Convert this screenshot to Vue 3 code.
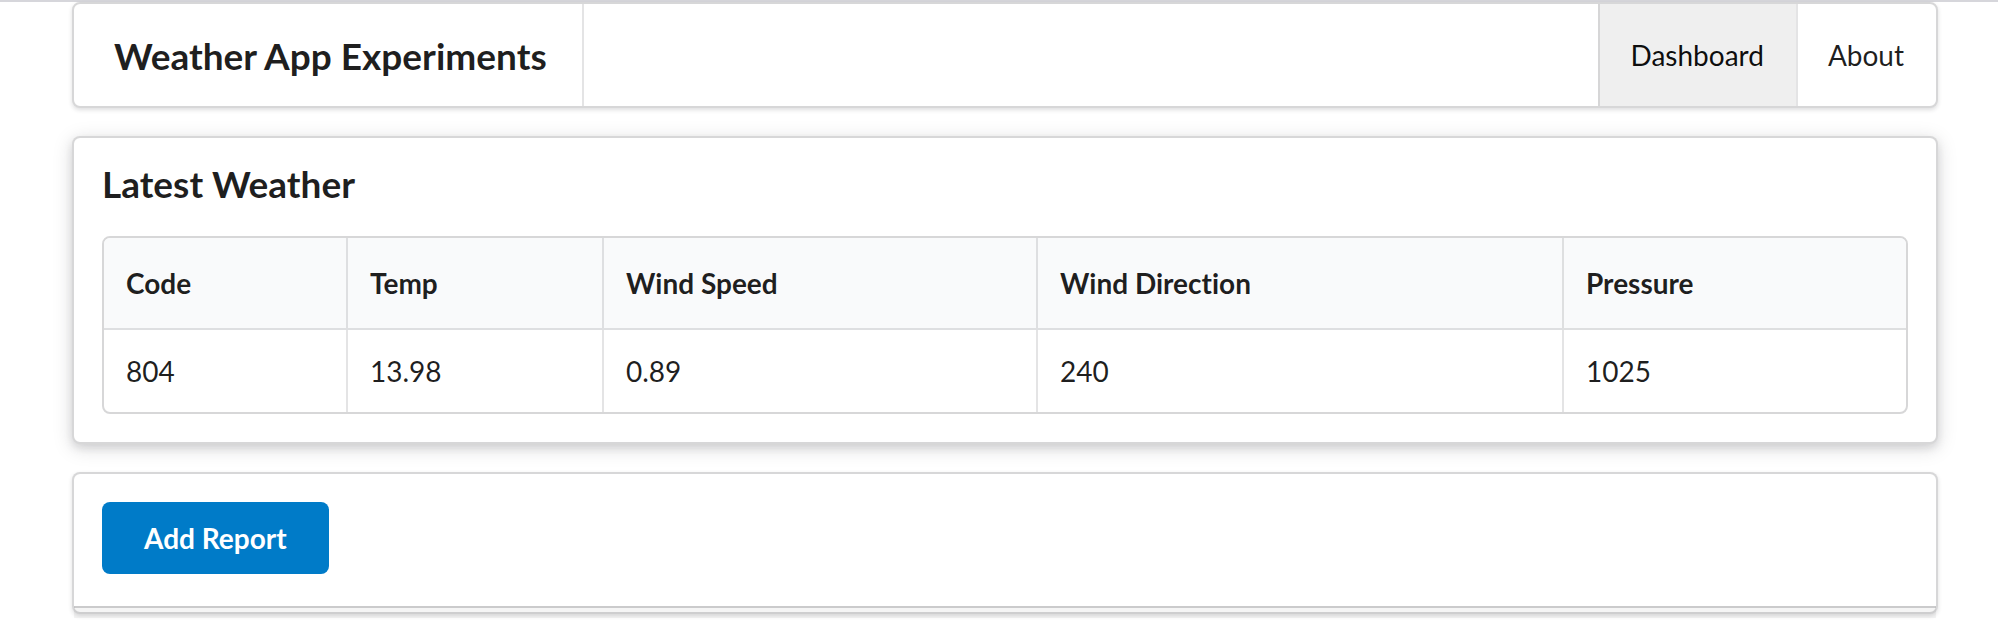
<script setup>
const links = [
  { label: 'Dashboard', active: true },
  { label: 'About', active: false },
]

// share: relative width of the column within the table
const columns = [
  { key: 'code', label: 'Code', share: 242 },
  { key: 'temp', label: 'Temp', share: 256 },
  { key: 'windSpeed', label: 'Wind Speed', share: 434 },
  { key: 'windDirection', label: 'Wind Direction', share: 526 },
  { key: 'pressure', label: 'Pressure', share: 344 },
]
const totalShare = columns.reduce((sum, column) => sum + column.share, 0)

const reports = [
  { code: '804', temp: '13.98', windSpeed: '0.89', windDirection: '240', pressure: '1025' },
]
</script>

<template>
  <div class="page">
    <header class="menu">
      <h1 class="brand">Weather App Experiments</h1>
      <nav class="links">
        <a
          v-for="link in links"
          :key="link.label"
          href="#"
          class="link"
          :class="{ active: link.active }"
          :aria-current="link.active ? 'page' : null"
        >{{ link.label }}</a>
      </nav>
    </header>

    <main class="content">
      <section class="segment raised">
        <h2 class="heading">Latest Weather</h2>
        <table class="table">
          <colgroup>
            <col
              v-for="column in columns"
              :key="column.key"
              :style="{ width: (column.share / totalShare) * 100 + '%' }"
            >
          </colgroup>
          <thead>
            <tr>
              <th v-for="column in columns" :key="column.key" scope="col">{{ column.label }}</th>
            </tr>
          </thead>
          <tbody>
            <tr v-for="report in reports" :key="report.code">
              <td v-for="column in columns" :key="column.key">{{ report[column.key] }}</td>
            </tr>
          </tbody>
        </table>
      </section>

      <section class="segment stacked">
        <button type="button" class="button">Add Report</button>
      </section>
    </main>
  </div>
</template>

<style>
body {
  margin: 0;
  background: #fff;
}
</style>

<style scoped>
.page {
  box-sizing: border-box;
  padding: 0 60px 20px 72px;
  border-top: 2px solid #d6d6db;
  font-family: Lato, "Helvetica Neue", Arial, sans-serif;
  font-size: 28px;
  line-height: 38px;
  font-variant-ligatures: none;
  color: rgba(0, 0, 0, 0.88);
}

.menu {
  display: flex;
  justify-content: space-between;
  min-height: 102px;
  border: 2px solid rgba(34, 36, 38, 0.18);
  border-radius: 8px;
  box-shadow: 0 2px 4px 0 rgba(34, 36, 38, 0.15);
}

.brand {
  display: flex;
  align-items: center;
  margin: 0;
  padding: 2px 35px 0 40px;
  border-right: 2px solid rgba(34, 36, 38, 0.12);
  font-size: 37px;
  font-weight: 700;
}

.links {
  display: flex;
}

.link {
  display: flex;
  align-items: center;
  padding: 0 32px 0 30px;
  border-left: 2px solid rgba(34, 36, 38, 0.12);
  color: rgba(0, 0, 0, 0.88);
  text-decoration: none;
}

.link:last-child {
  border-radius: 0 8px 8px 0;
}

.link.active {
  background: #efefef;
  color: rgba(0, 0, 0, 0.95);
}

.content {
  display: flex;
  flex-direction: column;
  gap: 28px;
  margin-top: 28px;
}

.segment {
  position: relative;
  padding: 28px;
  border: 2px solid rgba(34, 36, 38, 0.18);
  border-radius: 8px;
  background: #fff;
}

.raised {
  box-shadow:
    0 4px 8px 0 rgba(34, 36, 38, 0.12),
    0 4px 20px 0 rgba(34, 36, 38, 0.15);
}

.stacked {
  padding-bottom: 38px;
  box-shadow: 0 2px 4px 0 rgba(34, 36, 38, 0.15);
}

/* Second sheet peeking out under the stacked segment */
.stacked::after {
  content: "";
  position: absolute;
  box-sizing: border-box;
  bottom: -6px;
  left: 0;
  width: 100%;
  height: 12px;
  border-top: 2px solid rgba(34, 36, 38, 0.2);
  background: rgba(0, 0, 0, 0.04);
}

.heading {
  margin: 0 0 34px;
  font-size: 37px;
  font-weight: 700;
  line-height: 36px;
}

.table {
  width: 100%;
  border: 2px solid rgba(34, 36, 38, 0.18);
  border-radius: 8px;
  border-collapse: separate;
  border-spacing: 0;
  table-layout: fixed;
  text-align: left;
}

.table th {
  padding: 26px 22px;
  border-bottom: 2px solid rgba(34, 36, 38, 0.12);
  border-left: 2px solid rgba(34, 36, 38, 0.12);
  background: #f9fafb;
  font-weight: 700;
}

.table td {
  padding: 22px;
  border-left: 2px solid rgba(34, 36, 38, 0.12);
}

.table th:first-child,
.table td:first-child {
  border-left: 0;
}

.table th:first-child {
  border-top-left-radius: 6px;
}

.table th:last-child {
  border-top-right-radius: 6px;
}

.button {
  display: block;
  padding: 22px 42px;
  border: 0;
  border-radius: 8px;
  background: #007bc8;
  color: #fff;
  font: inherit;
  font-weight: 700;
  line-height: 28px;
  cursor: pointer;
}
</style>
